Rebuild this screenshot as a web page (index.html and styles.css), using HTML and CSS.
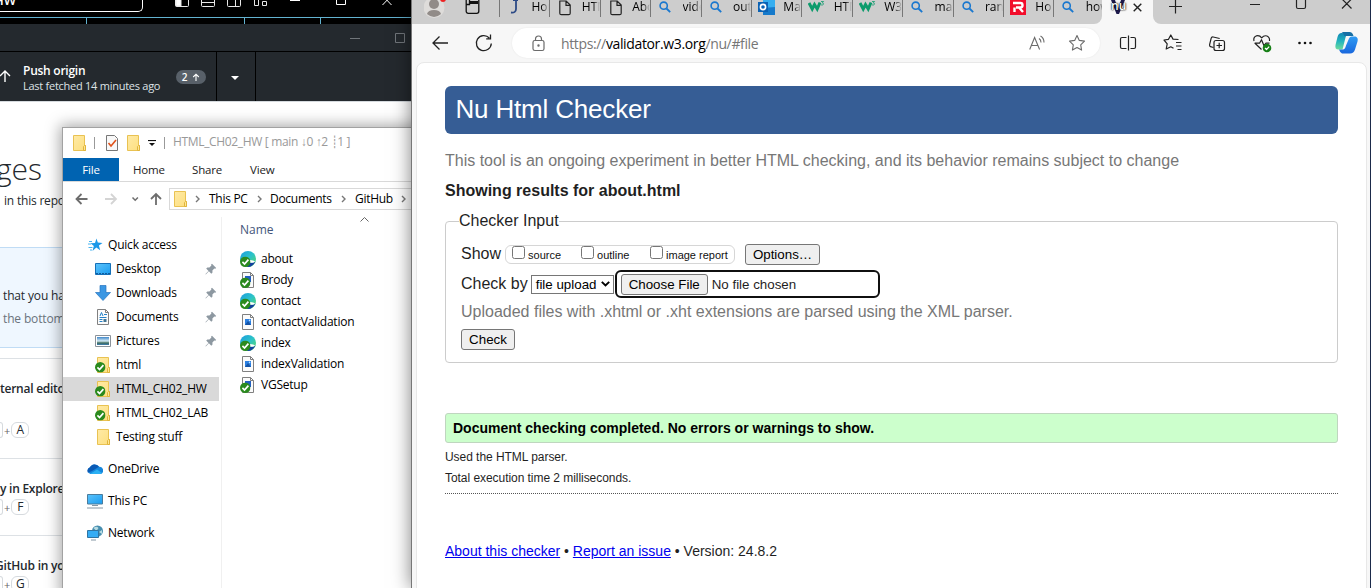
FILE: index.html
```html
<!DOCTYPE html>
<html lang="en">
<head>
<meta charset="utf-8">
<title>Desktop</title>
<link rel="stylesheet" href="styles.css">
</head>
<body>
<svg class="defs" width="0" height="0">
  <defs>
    <linearGradient id="gFolder" x1="0" y1="0" x2="1" y2="1"><stop offset="0" stop-color="#ffeaa6"/><stop offset="1" stop-color="#fddf7e"/></linearGradient>
    <linearGradient id="gEdge" x1="0" y1="0" x2="1" y2="1"><stop offset="0" stop-color="#1a9be0"/><stop offset=".5" stop-color="#2cc3c8"/><stop offset="1" stop-color="#5fd85a"/></linearGradient>
    <linearGradient id="gSky" x1="0" y1="0" x2="1" y2="1"><stop offset="0" stop-color="#5cc3fb"/><stop offset="1" stop-color="#1a9cf0"/></linearGradient>
    <linearGradient id="gPic" x1="0" y1="0" x2="0" y2="1"><stop offset="0" stop-color="#3f87c9"/><stop offset=".5" stop-color="#d5ebf5"/><stop offset=".75" stop-color="#3d6a5c"/><stop offset="1" stop-color="#3f7fb5"/></linearGradient>
    <linearGradient id="gCopA" x1="0" y1="0" x2="0" y2="1"><stop offset="0" stop-color="#1287b5"/><stop offset=".5" stop-color="#24b5bd"/><stop offset="1" stop-color="#6ddc9c"/></linearGradient>
    <linearGradient id="gCopB" x1="0" y1="0" x2="0" y2="1"><stop offset="0" stop-color="#2f9bf3"/><stop offset="1" stop-color="#1967dd"/></linearGradient>
  </defs>
  <symbol id="folder" viewBox="0 0 16 16"><path d="M1.500.500h11v10h1v5h-12z" fill="url(#gFolder)" stroke="#e9c252"/><path d="M11.500 15.500v-4l1-1h1v5z" fill="#ffe696" stroke="#e0b53c"/></symbol>
  <symbol id="check" viewBox="0 0 10 10"><circle cx="5" cy="5" r="5" fill="#2b8a1e"/><path d="M2.300 5.200l2 2L8 3" fill="none" stroke="#fff" stroke-width="1.600"/></symbol>
  <symbol id="folderOk" viewBox="0 0 16 16"><use href="#folder" x="1" y="0" width="16" height="16"/><use href="#check" x="0" y="5" width="10.500" height="10.500"/></symbol>
  <symbol id="page" viewBox="0 0 16 16"><path d="M2.500.500h8l3 3v12h-11z" fill="#fbfbfb" stroke="#808080"/><path d="M10.500.500v3h3" fill="none" stroke="#808080"/></symbol>
  <symbol id="imgFile" viewBox="0 0 16 16"><use href="#page" width="16" height="16"/><path d="M5 5h6v6H5z" fill="#2b7fe0"/><path d="M5 11l3-4 3 4z" fill="#1553a5"/><circle cx="9.600" cy="6.400" r=".8" fill="#bfe4ff"/></symbol>
  <symbol id="imgOk" viewBox="0 0 16 16"><use href="#page" width="16" height="16"/><path d="M5 4h6v6H5z" fill="#235fc0"/><use href="#check" x="0" y="5.500" width="10.500" height="10.500"/></symbol>
  <symbol id="edgeOk" viewBox="0 0 16 16"><circle cx="8" cy="8" r="8" fill="url(#gEdge)"/><path d="M5 14.500C9 10 12 13 15.500 10.500 14 14 11 16 8 16z" fill="#123f9e"/><path d="M8 10c0-2 6-1 7 .5-1 1.500-5 2-7-.5z" fill="#fff"/><use href="#check" x="0" y="5.500" width="10.500" height="10.500"/></symbol>
  <symbol id="pin" viewBox="0 0 12 12"><path d="M7 .8L11.200 5l-1 .8-.9-.3-1.900 2 .1 2-1.200 1.200L3.900 8.300.8 11.400.5 11.100l3-3.200L1.200 5.600l1.200-1.200 2 .1 2-1.900L6.100 1.600z" fill="#8d98a1"/></symbol>
  <symbol id="find" viewBox="0 0 12 12"><circle cx="4.700" cy="4.700" r="3.600" fill="none" stroke="#1a78cf" stroke-width="1.600"/><path d="M7.500 7.500l3.700 3.700" stroke="#1a78cf" stroke-width="1.800"/></symbol>
  <symbol id="doc" viewBox="0 0 14 16"><path d="M1.800 1h6.400l4 4v8.200c0 .9-.6 1.500-1.500 1.500H3.300c-.9 0-1.500-.6-1.500-1.500zM8 1v4.300h4.200" fill="none" stroke="#222" stroke-width="1.200"/></symbol>
  <symbol id="w3" viewBox="0 0 17 14"><path d="M1 3l3.200 6 2.300-4.500 2.700 4.500L12 2.500" fill="none" stroke="#0d9b6c" stroke-width="3"/><path d="M13 1.500h2.600l-1.300 1.400c2 .2 1.600 2.700-1.300 2" fill="none" stroke="#0d9b6c" stroke-width=".8"/></symbol>
  <symbol id="chev" viewBox="0 0 5 8"><path d="M1 1l3 3-3 3" fill="none" stroke="#777" stroke-width="1.400"/></symbol>
</svg>

<main class="desktop">
  <section class="win code">
    <div class="code-bar">
      <div class="code-search">HW</div>
      <svg class="code-icons" width="97" height="8" fill="none" stroke="#e8e8e8"><path d="M1.500-4v9.500q0 1 1 1h11q1 0 1-1V-4"/><path d="M2-4h5v10H2z" fill="#fff"/><path d="M27.500-4v9.500q0 1 1 1h11q1 0 1-1V-4M27.500 2.500h13M53.500-4v9.500q0 1 1 1h11q1 0 1-1V-4M61.500-4V6M80.500-4v9.500h4V-4M88.500 1.500h4v4h-4z"/></svg>
      <svg class="code-ctl" width="110" height="8" fill="none" stroke="#fff"><path d="M5 .5h10M51.500-5v9.500h9V-5M97.500 5l9-9.500M106.500 5l-9-9.500"/></svg>
    </div>
    <div class="code-rule"><i></i><i></i><i></i></div>
  </section>

  <section class="win git">
    <div class="git-title"><svg width="62" height="12" fill="none" stroke="#70757a"><path d="M6 6.500h10M51.500 1.500h9v9h-9z"/></svg></div>
    <div class="git-tools">
      <svg class="push-arrow" width="11" height="13" fill="none" stroke="#fff" stroke-width="1.400"><path d="M5 12V1.500M0 6l5-5 5 5"/></svg>
      <div class="push"><b>Push origin</b><span>Last fetched 14 minutes ago</span></div>
      <div class="badge">2<svg width="8" height="9" fill="none" stroke="#fff" stroke-width="1.100"><path d="M4 8V1.500M1.200 4L4 1.200 6.800 4"/></svg></div>
      <div class="drop"><svg width="8" height="4"><path d="M0 0h8L4 4z" fill="#fff"/></svg></div>
    </div>
    <div class="git-body">
      <h1>ges</h1>
      <p class="repo">in this repo</p>
      <div class="notice"><p>that you ha</p><p class="dim">the bottom</p></div>
      <div class="gap"></div>
      <div class="tip t1"><p>ternal edito</p><div class="keys"><kbd class="cut"></kbd>+<kbd>A</kbd></div></div>
      <div class="tip t2"><p>y in Explore</p><div class="keys"><kbd class="cut"></kbd>+<kbd>F</kbd></div></div>
      <div class="tip t3"><p>GitHub in yo</p><div class="keys"><kbd class="cut"></kbd>+<kbd>G</kbd></div></div>
    </div>
  </section>

  <section class="win explorer">
    <div class="ex-title">
      <svg width="16" height="16"><use href="#folder"/></svg><i class="bar b1"></i>
      <svg class="prop" width="14" height="16" viewBox="0 0 14 16"><path d="M1.500.500h8l3 3v12h-11z" fill="#f8f8f8" stroke="#777"/><path d="M3.500 8l2.500 3 5-6" fill="none" stroke="#e0521b" stroke-width="1.600"/></svg>
      <svg class="f2" width="16" height="16"><use href="#folder"/></svg>
      <svg class="dd" width="8" height="7"><path d="M0 .500h8" stroke="#111" stroke-width="1.200"/><path d="M1 3h6L4 6z" fill="#111"/></svg><i class="bar b2"></i>
      <span>HTML_CH02_HW [ main ↓0 ↑2 ┊1 ]</span>
    </div>
    <div class="ribbon"><b>File</b><span class="r1">Home</span><span class="r2">Share</span><span class="r3">View</span></div>
    <div class="ex-nav">
      <svg class="arrows" width="88" height="14" fill="none" stroke="#6d6d6d" stroke-width="1.800"><path d="M12.500 7H1.500M6.500 2l-5 5 5 5"/><path stroke="#d4d4d4" d="M30 7h11M36 2l5 5-5 5"/><path stroke-width="1.500" d="M57.500 5.500l2.700 2.700 2.700-2.700"/><path d="M81 13V2M76 7l5-5 5 5"/></svg>
      <div class="crumbs"><svg width="16" height="16"><use href="#folder"/></svg><svg class="c1" width="5" height="8"><use href="#chev"/></svg><span class="k1">This PC</span><svg class="c2" width="5" height="8"><use href="#chev"/></svg><span class="k2">Documents</span><svg class="c3" width="5" height="8"><use href="#chev"/></svg><span class="k3">GitHub</span><svg class="c4" width="5" height="8"><use href="#chev"/></svg></div>
    </div>
    <div class="ex-main">
      <ul class="tree">
        <li class="root"><svg width="15" height="14" viewBox="0 0 15 14"><path d="M8.500.500l1.300 4 4.700.4-3.600 2.700 1.300 4.700-3.900-2.700-3.800 3.400 1.300-5L2.500 5.200l4.500-.3z" fill="#1b98e8"/><path d="M1 3.500h3M0 6h3M.500 9.500h4M2 12h2" stroke="#48b4f0"/></svg><span>Quick access</span></li>
        <li><svg width="16" height="16" viewBox="0 0 16 16"><path d="M.500 2.500h15v11H.500z" fill="url(#gSky)" stroke="#1570b8"/><path d="M1 12.500h14" stroke="#0f5d9d" stroke-dasharray="2 1"/></svg><span>Desktop</span><svg class="pin" width="12" height="12"><use href="#pin"/></svg></li>
        <li><svg width="16" height="16" viewBox="0 0 16 16"><path d="M5 .500h6v7h4.500L8 15.500.500 7.500H5z" fill="#3b97e3" stroke="#2573bf" stroke-width=".7"/></svg><span>Downloads</span><svg class="pin" width="12" height="12"><use href="#pin"/></svg></li>
        <li><svg width="16" height="16" viewBox="0 0 16 16"><use href="#page" width="16" height="16"/><path d="M5 7l1.500-3.500L8 7M9 5.500h3M4.500 8.500h7M4.500 10.500h3M4.500 12.500h3" stroke="#2380c8" fill="none"/><path d="M8.500 10h3v3h-3z" fill="#427593"/></svg><span>Documents</span><svg class="pin" width="12" height="12"><use href="#pin"/></svg></li>
        <li><svg width="16" height="16" viewBox="0 0 16 16"><path d="M.500 2.500h15v11H.500z" fill="#fff" stroke="#8b929a"/><path d="M2 4h12v8H2z" fill="url(#gPic)"/></svg><span>Pictures</span><svg class="pin" width="12" height="12"><use href="#pin"/></svg></li>
        <li><svg width="16" height="16"><use href="#folderOk"/></svg><span>html</span></li>
        <li class="sel"><svg width="16" height="16"><use href="#folderOk"/></svg><span>HTML_CH02_HW</span></li>
        <li><svg width="16" height="16"><use href="#folderOk"/></svg><span>HTML_CH02_LAB</span></li>
        <li><svg width="16" height="16" viewBox="-1 0 16 16"><use href="#folder" width="16" height="16"/></svg><span>Testing stuff</span></li>
        <li class="root sp"><svg width="16" height="16" viewBox="0 0 16 16"><path d="M3.500 13a3.500 3.500 0 01-.8-6.500A5.500 5.500 0 0112 5.800 3.600 3.600 0 0113 13z" fill="#1586dc"/><path d="M2.700 6.500A5.500 5.500 0 0112 5.800L5 10 1 11.800A3.500 3.500 0 012.700 6.500z" fill="#0a5ab5"/><path d="M3 13l7-4.500 5 3.500q-.8 1-2 1z" fill="#2bb0f3"/></svg><span>OneDrive</span></li>
        <li class="root sp"><svg width="16" height="16" viewBox="0 0 16 16"><path d="M.500 1.500h15v9.500H.500z" fill="url(#gSky)" stroke="#4b7c9c"/><path d="M5 12.500h6M0 15h16" stroke="#8496a4"/></svg><span>This PC</span></li>
        <li class="root sp"><svg width="16" height="16" viewBox="0 0 16 16"><circle cx="10.500" cy="6" r="5.500" fill="#478eaf"/><path d="M6.500 3q3-2.500 5 0l-2 3M12 7l3-2v4z" fill="#b7dbe2"/><path d="M.500 5.500h11v7H.500z" fill="#35acf4" stroke="#3074a2"/><path d="M4 15h5" stroke="#8496a4"/></svg><span>Network</span></li>
      </ul>
      <div class="files">
        <svg class="up" width="9" height="5" fill="none" stroke="#666"><path d="M.500 4.500l4-4 4 4"/></svg>
        <div class="name">Name</div>
        <ul>
          <li><svg width="16" height="16"><use href="#edgeOk"/></svg>about</li>
          <li><svg width="16" height="16"><use href="#imgOk"/></svg>Brody</li>
          <li><svg width="16" height="16"><use href="#edgeOk"/></svg>contact</li>
          <li><svg width="16" height="16"><use href="#imgFile"/></svg>contactValidation</li>
          <li><svg width="16" height="16"><use href="#edgeOk"/></svg>index</li>
          <li><svg width="16" height="16"><use href="#imgFile"/></svg>indexValidation</li>
          <li><svg width="16" height="16"><use href="#imgOk"/></svg>VGSetup</li>
        </ul>
      </div>
    </div>
  </section>

  <section class="win edge">
    <div class="strip">
      <div class="strip-left">
        <svg class="avatar" width="22" height="18" viewBox="0 0 22 18"><circle cx="10" cy="7.500" r="10.500" fill="#dedcda"/><circle cx="10" cy="4" r="5" fill="#918b88"/><path d="M3 14q1-4 7-4t7 4q-7 6-14 0z" fill="#918b88"/><circle cx="19" cy="-1" r="3" fill="#e22"/></svg>
        <svg class="wsp" width="15" height="15" fill="none" stroke="#111" stroke-width="1.300"><rect x="1.200" y="-3" width="12.600" height="16.300" rx="2"/><path d="M4.500 2.500H13" stroke-width="3"/><path d="M1 4.500h3.500V0"/></svg>
        <div class="tab"><svg width="14" height="16" viewBox="0 0 14 16"><path d="M5 0h5M8 0v9q0 4-5 3.500" fill="none" stroke="#2c4a86" stroke-width="1.800"/></svg><span>Hor</span></div>
        <div class="tab"><svg width="14" height="16"><use href="#doc"/></svg><span>HTM</span></div>
        <div class="tab"><svg width="14" height="16"><use href="#doc"/></svg><span>Abo</span></div>
        <div class="tab"><svg width="12" height="12"><use href="#find"/></svg><span>vide</span></div>
        <div class="tab"><svg width="12" height="12"><use href="#find"/></svg><span>out</span></div>
        <div class="tab wide"><svg width="17" height="16" viewBox="0 0 17 16"><path d="M5 0h12v15H5z" fill="#35aef0"/><path d="M5 8l12-1v8H5z" fill="#167acb"/><path d="M0 2h10v10H0z" fill="#0b62b4"/><circle cx="5" cy="7" r="2.600" fill="none" stroke="#fff" stroke-width="1.600"/></svg><span>Ma</span></div>
        <div class="tab wide"><svg width="17" height="14"><use href="#w3"/></svg><span>HTM</span></div>
        <div class="tab wide"><svg width="17" height="14"><use href="#w3"/></svg><span>W3</span></div>
        <div class="tab"><svg width="12" height="12"><use href="#find"/></svg><span>ma</span></div>
        <div class="tab"><svg width="12" height="12"><use href="#find"/></svg><span>ran</span></div>
        <div class="tab wide"><svg width="16" height="16" viewBox="0 0 16 16"><path d="M0 0h16v15H0z" fill="#f20d2b"/><path d="M3 3h7.500q2 0 2 2.200T10.500 7.500H6M4.500 7.500V12M9 7.500l4 4.500" fill="none" stroke="#fff" stroke-width="2.400"/></svg><span>Ho</span></div>
        <div class="tab"><svg width="12" height="12"><use href="#find"/></svg><span>how</span></div>
      </div>
      <div class="tab-on"><div class="nu"><svg width="16" height="16" viewBox="0 0 16 16"><path d="M1 0h4l3 9 3-9h4L9 14H6.500z" fill="#1d1a4c"/></svg><em>nu</em></div><svg width="9" height="9" stroke="#222" stroke-width="1.400"><path d="M.700.700l7.600 7.600M8.300.700L.700 8.300"/></svg></div>
      <div class="strip-right"><svg width="216" height="18" fill="none" stroke="#222" stroke-width="1.200"><path d="M15 6.500h13M21.500-1v14.500M96 4.500h10M142.500-2v9q0 1.500 1.500 1.500h6q1.500 0 1.500-1.500v-9M188-1l9.500 9.500M197.500-1L188 8.500"/></svg></div>
    </div>
    <div class="tools">
      <svg class="nav" width="64" height="20" fill="none" stroke="#222" stroke-width="1.300"><path d="M16 10H1M7.500 3.500L1 10l6.500 6.500"/><path d="M59.300 10.500a7.500 7.500 0 11-2-5.500M58.500 1.500v4.300h-4.300"/></svg>
      <div class="url">
        <svg class="lock" width="13" height="17" fill="none" stroke="#6b6b6b" stroke-width="1.200"><rect x="1" y="5.500" width="11" height="10" rx="1.800"/><path d="M3.500 5.500V4a3 3 0 016 0v1.500"/><circle cx="6.500" cy="10.500" r=".6" fill="#666"/></svg>
        <span>https://<b>validator.w3.org</b>/nu/#file</span>
        <svg class="read" width="16" height="16" fill="none" stroke="#6b6b6b" stroke-width="1.100"><path d="M.700 14.500L5.600 2.500l5 12M2.500 10.500h6.200M10 3.500q2 1.300 2 4M11.500 1q3.500 2 3.500 6.500"/></svg>
        <svg class="star" width="18" height="18" fill="none" stroke="#6b6b6b" stroke-width="1.100" stroke-linejoin="round"><path d="M9 1.500l2.300 4.900 5.200.7-3.800 3.700.9 5.300L9 13.500l-4.600 2.600.9-5.300L1.500 7.100l5.200-.7z"/></svg>
      </div>
      <svg class="acts" width="252" height="28" fill="none" stroke="#222" stroke-width="1.200" stroke-linejoin="round"><path d="M8.500 8.500H4Q2.500 8.500 2.500 10v8q0 1.500 1.500 1.500h4.500M12.500 8.500H16q1.500 0 1.500 1.500v8q0 1.500-1.500 1.500h-3.500M10.500 6.500v15"/><path d="M60.500 10.500l-5.500-.4L52.800 6l-2.300 4.300-4.500.7 3.200 3.800-1 5.200 4.600-2.200 2.700 1.400M58 13.500h5.500M58 17h5.500M59.500 20.500h4"/><path d="M95.500 18.500l-3-.8q-1.200-.5-.9-2l1.600-6.500q.4-1.500 2-1.200l6.500 1.500"/><rect x="96" y="11.500" width="10.500" height="10" rx="2"/><path d="M101.200 13.800v5.400M98.500 16.500H104"/><path d="M143.500 20.500l-6.500-6.300h4.500l2-3.500 2.500 6 2-2.500h3.500M136 12q-1-4 2.500-5.200 3-.8 5.200 2Q146 6 149 7q3 1.300 2.500 5"/><circle cx="149" cy="19" r="4.300" fill="#178017" stroke="none"/><path d="M147 19l1.500 1.500 2.700-2.800" stroke="#fff"/><g fill="#111" stroke="none"><circle cx="181.500" cy="14" r="1.300"/><circle cx="187" cy="14" r="1.300"/><circle cx="192.500" cy="14" r="1.300"/></g><g stroke="none" transform="translate(2.500 0)"><path d="M221 4q-3 0-4 4l-2 8q-.8 4.500 3 4.500h4l3-12q1-4 4-4z" fill="url(#gCopA)"/><path d="M221 3h8q3 0 4 4h-5l-4 0q-2-4-3-4z" fill="#1770a5"/><path d="M231 7.500h4q3 1 2 5l-2.500 8q-1.200 4-5 4h-8q-2-1-3-4h4q2 0 3-4l3-7q.800-2 2.500-2z" fill="url(#gCopB)"/></g></svg>
    </div>
    <div class="page">
      <h1>Nu Html Checker</h1>
      <p class="lead">This tool is an ongoing experiment in better HTML checking, and its behavior remains subject to change</p>
      <h2>Showing results for about.html</h2>
      <fieldset>
        <legend>Checker Input</legend>
        <div class="row show">Show <div class="opts"><label><i></i>source</label><label><i></i>outline</label><label><i></i>image report</label></div><button class="op">Options…</button></div>
        <div class="row by">Check by <div class="select">file upload<svg width="9" height="6" fill="none" stroke="#000" stroke-width="1.900"><path d="M.800.800l3.700 3.700L8.200.800"/></svg></div><div class="upload"><button class="cf">Choose File</button>No file chosen</div></div>
        <div class="row up-note">Uploaded files with .xhtml or .xht extensions are parsed using the XML parser.</div>
        <div class="row last"><button class="ck">Check</button></div>
      </fieldset>
      <div class="success">Document checking completed. No errors or warnings to show.</div>
      <p class="small">Used the HTML parser.</p>
      <p class="small">Total execution time 2 milliseconds.</p>
      <div class="dots"></div>
      <p class="foot"><a>About this checker</a> • <a>Report an issue</a> • Version: 24.8.2</p>
    </div>
  </section>
</main>
</body>
</html>
```
FILE: styles.css
```css
* { box-sizing: border-box; margin: 0; padding: 0; }
body { width: 1371px; height: 588px; overflow: hidden; font-family: "Open Sans", "Noto Sans", sans-serif; font-size: 12px; color: #000; }
svg { flex: none; display: block; }
ul { list-style: none; }
i, em { font-style: normal; }
.defs { position: absolute; }
.desktop { position: relative; width: 1371px; height: 588px; overflow: hidden; background: #fff; }
.win { position: absolute; overflow: hidden; white-space: nowrap; }

/* Code editor */
.code { left: 0; top: 0; width: 412px; height: 24px; background: #000; }
.code-bar { height: 17px; display: flex; align-items: flex-start; }
.code-search { width: 143px; height: 12px; border: 1px solid #fff; border-width: 0 1px 1px 0; border-radius: 0 0 5px 0; color: #fff; line-height: 1px; font-weight: 600; font-size: 13px; text-indent: -6px; }
.code-icons { margin-left: 31px; }
.code-ctl { margin-left: 14px; }
.code-rule { height: 7px; border-top: 1px solid #62b2d0; display: flex; }
.code-rule i { width: 1px; background: #62b2d0; margin-left: 86px; }
.code-rule i + i { margin-left: 157px; }
.code-rule i + i + i { margin-left: 75px; }

/* Git client */
.git { left: 0; top: 24px; width: 412px; height: 564px; background: #fff; color: #24292e; }
.git-title { height: 28px; background: #24292e; border-bottom: 1px solid #000; display: flex; justify-content: flex-end; padding: 8px 6px 0 0; }
.git-tools { height: 50px; background: #24292e; border-bottom: 1px solid #d5dade; display: flex; color: #fff; }
.push-arrow { margin: 18px 12px 0 0; }
.push { width: 153px; padding-top: 11px; display: flex; flex-direction: column; line-height: 15px; }
.push b { font-weight: 600; letter-spacing: -.25px; }
.push span { color: #dfe3e6; font-size: 11px; letter-spacing: -.26px; }
.badge { width: 30px; height: 14px; margin-top: 18px; border-radius: 7px; background: #586069; font-size: 10px; line-height: 14px; font-weight: 600; display: flex; align-items: center; justify-content: center; gap: 5px; }
.drop { width: 40px; margin-left: 10px; border: 1px solid #000; border-width: 0 1px; display: flex; justify-content: center; padding: 24px 2px 0 0; }
.git-body h1 { font-weight: 300; font-size: 30px; line-height: 40px; padding-top: 47px; margin-left: -4px; height: 88px; }
.repo { padding-left: 4px; line-height: 20px; height: 57px; padding-top: 1px; letter-spacing: -.2px; }
.notice { height: 101px; background: #eff7ff; border: 1px solid #c0dcf5; border-width: 1px 0; padding: 38px 0 0 3px; letter-spacing: -.15px; }
.notice p { line-height: 20px; height: 23px; }
.notice .dim { color: #6a737d; }
.gap { height: 10px; }
.tip { border-top: 1px solid #dde1e5; }
.tip p { font-weight: 600; line-height: 20px; padding-top: 20px; letter-spacing: -.25px; }
.t1 { height: 100px; } .t2 { height: 77px; }
.t3 p { margin-left: -5px; letter-spacing: -.2px; }
.keys { display: flex; align-items: center; gap: 1px; color: #666; font-size: 11px; line-height: 15px; }
.t1 .keys { margin-top: 23px; }
.keys kbd { font-family: inherit; font-size: 12px; width: 18px; height: 16px; border: 1px solid #d6dade; border-radius: 6px; text-align: center; line-height: 14px; color: #24292e; }
.keys .cut { width: 3px; border-left: 0; border-radius: 0 5px 5px 0; }

/* File explorer */
.explorer { left: 62px; top: 127px; width: 360px; height: 470px; background: #fff; border: 1px solid #a2a2a2; box-shadow: 0 0 14px 2px rgba(0,0,0,.35); }
.ex-title { height: 30px; display: flex; align-items: center; padding-left: 9px; color: #999; }
.bar { width: 1px; height: 12px; background: #999; }
.b1 { margin-left: 6px; } .prop { margin-left: 10px; } .f2 { margin-left: 7px; } .dd { margin-left: 6px; } .b2 { margin: 0 8px 0 8px; }
.ex-title span { letter-spacing: -.34px; line-height: 16px; margin-top: -2px; }
.ribbon { height: 24px; display: flex; line-height: 24px; border-bottom: 1px solid #d9d9d9; font-size: 11.500px; color: #222; letter-spacing: -.15px; }
.ribbon b { width: 56px; height: 23px; background: #0063b1; color: #fff; text-align: center; font-weight: 400; }
.r1 { width: 59px; padding-left: 14px; } .r2 { width: 58px; padding-left: 14px; } .r3 { padding-left: 14px; }
.ex-nav { display: flex; padding: 6px 0 0 12px; height: 35px; }
.arrows { margin-top: 4px; }
.crumbs { flex: 1; height: 22px; margin-left: 6px; border: 1px solid #d9d9d9; display: flex; align-items: center; padding-left: 3px; }
.c1 { margin-left: 6px; } .k1 { width: 39px; margin-left: 9px; } .c2 { margin-left: 9px; } .k2 { width: 62px; margin-left: 8px; } .c3 { margin-left: 9px; } .k3 { width: 38px; margin-left: 9px; } .c4 { margin-left: 8px; }
.crumbs span { letter-spacing: -.28px; margin-top: -1px; }
.ex-main { display: flex; height: 400px; }
.tree { width: 159px; padding-top: 16px; border-right: 1px solid #f0f0f0; }
.tree li { height: 24px; display: flex; align-items: center; padding: 0 2px 0 32px; width: 156px; }
.tree li span { margin: -2px 0 0 5px; letter-spacing: -.2px; }
.tree li.root { padding-left: 25px; }
.tree li.root.sp { margin-top: 8px; padding-left: 24px; }
.tree li.sel { background: #d9d9d9; }
.tree .pin { margin-left: auto; }
.files { padding-left: 18px; }
.up { margin: 0 0 0 120px; }
.name { height: 26px; line-height: 16px; color: #43557a; }
.files ul li { height: 21px; display: flex; align-items: center; gap: 5px; letter-spacing: -.22px; }

/* Browser */
.edge { left: 411px; top: 0; width: 960px; height: 588px; background: #f7f7f7; border-right: 1px solid #1b2a4a; border-left: 1px solid #777; box-shadow: 0 0 18px rgba(0,0,0,.5); }
.strip { height: 24px; display: flex; background: #f7f7f7; }
.strip-left { width: 691px; background: #cdcdcd; border-radius: 0 0 8px 0; display: flex; overflow: hidden; }
.avatar { margin-left: 12px; }
.wsp { margin: 0 19px 0 19px; }
.tab { flex: none; width: 50.4px; height: 17px; border-left: 1px solid #777; display: flex; padding-left: 8px; overflow: hidden; font-size: 12px; line-height: 14px; }
.tab svg { margin-right: auto; }
.tab span { width: 18px; flex: none; overflow: hidden; -webkit-mask-image: linear-gradient(90deg, #000 60%, transparent); mask-image: linear-gradient(90deg, #000 60%, transparent); }
.tab svg[width="12"] { margin-top: 1px; }
.tab.wide { padding-left: 6px; }
.tab-on { width: 51px; padding: 3px 0 0 8px; display: flex; gap: 7px; }
.nu { position: relative; width: 16px; margin: -3px 0 0 0; }
.nu em { position: absolute; left: 1px; top: 0; color: #fff; font-weight: 600; font-size: 12px; line-height: 12px; text-shadow: 0 0 2px #000, 0 0 1px #000; }
.strip-right { flex: 1; background: #cdcdcd; border-radius: 0 0 0 8px; padding-left: 1px; }
.tools { height: 38px; display: flex; align-items: center; padding-left: 20px; }
.nav { margin-right: 16px; }
.url { width: 590px; height: 30px; border-radius: 15px; background: #fff; box-shadow: 0 0 2px rgba(0,0,0,.08); display: flex; align-items: center; padding-left: 20px; font-size: 14px; color: #767676; }
.url span { width: 463px; margin-left: 16px; letter-spacing: -.36px; }
.url b { font-weight: 400; color: #000; }
.read { margin-left: 5px; } .star { margin-left: 23px; }
.acts { margin-left: 18px; }
.page { margin: 0 3px 0 4px; height: 530px; background: #fff; border: 1px solid #e8e8e8; border-radius: 8px 8px 0 0; padding: 23px 28px 0; font-family: "Liberation Sans", Arial, sans-serif; font-size: 16px; color: #1f1f1f; }
.page h1 { height: 48px; background: #365d95; color: #fff; border-radius: 6px; font-weight: 400; font-size: 26px; line-height: 46px; padding-left: 10.500px; letter-spacing: -.18px; }
.lead { line-height: 20px; margin-top: 17px; color: #777; }
.page h2 { font-size: 16px; line-height: 20px; margin-top: 10px; }
fieldset { margin-top: 10px; height: 152px; border: 1px solid #ccc; border-radius: 4px; padding: 10px 15px 0; }
legend { line-height: 20px; height: 20px; margin-left: -2px; }
.row { display: flex; align-items: center; height: 28px; }
.row.show { height: 26px; }
.row.by { height: 34px; }
.row.up-note { height: 22px; color: #777; }
.row.last { height: 32px; }
.row button { font: 13.333px "Liberation Sans", Arial, sans-serif; height: 21px; background: #efefef; border: 1px solid #767676; border-radius: 3px; color: #000; }
.opts { width: 230px; height: 19px; margin-left: 4px; border: 1px solid #d6d6d6; border-radius: 6px; display: flex; font-size: 11px; color: #111; padding-left: 6px; }
.opts label { width: 69px; display: flex; line-height: 19px; }
.opts i { width: 13px; height: 13px; border: 1px solid #767676; border-radius: 2.500px; margin-right: 3px; flex: none; }
.op { width: 75px; margin-left: 10px; }
.select { width: 83px; height: 19px; margin-left: 3px; border: 1px solid #767676; font-size: 13.333px; color: #000; display: flex; align-items: center; padding-left: 4px; justify-content: space-between; padding-right: 3px; }
.upload { width: 265px; height: 28px; border: 2px solid #101010; border-radius: 6px; margin-left: 1px; display: flex; align-items: center; padding-left: 4px; font-size: 13.333px; }
.cf { width: 87px; margin-right: 4px; }
.ck { width: 54px; }
.success { height: 30px; margin-top: 50px; background: #cfc; border: 1px solid #bfd6bf; border-radius: 3px; color: #000; font-size: 14px; font-weight: 700; line-height: 28px; padding-left: 7px; }
.small { font-size: 12px; line-height: 21px; letter-spacing: -.05px; }
.success + .small { margin-top: 4px; }
.dots { border-top: 1px dotted #555; margin-top: 4px; }
.foot { font-size: 14px; line-height: 20px; margin-top: 47px; }
.foot a { color: #00e; text-decoration: underline; }
```
